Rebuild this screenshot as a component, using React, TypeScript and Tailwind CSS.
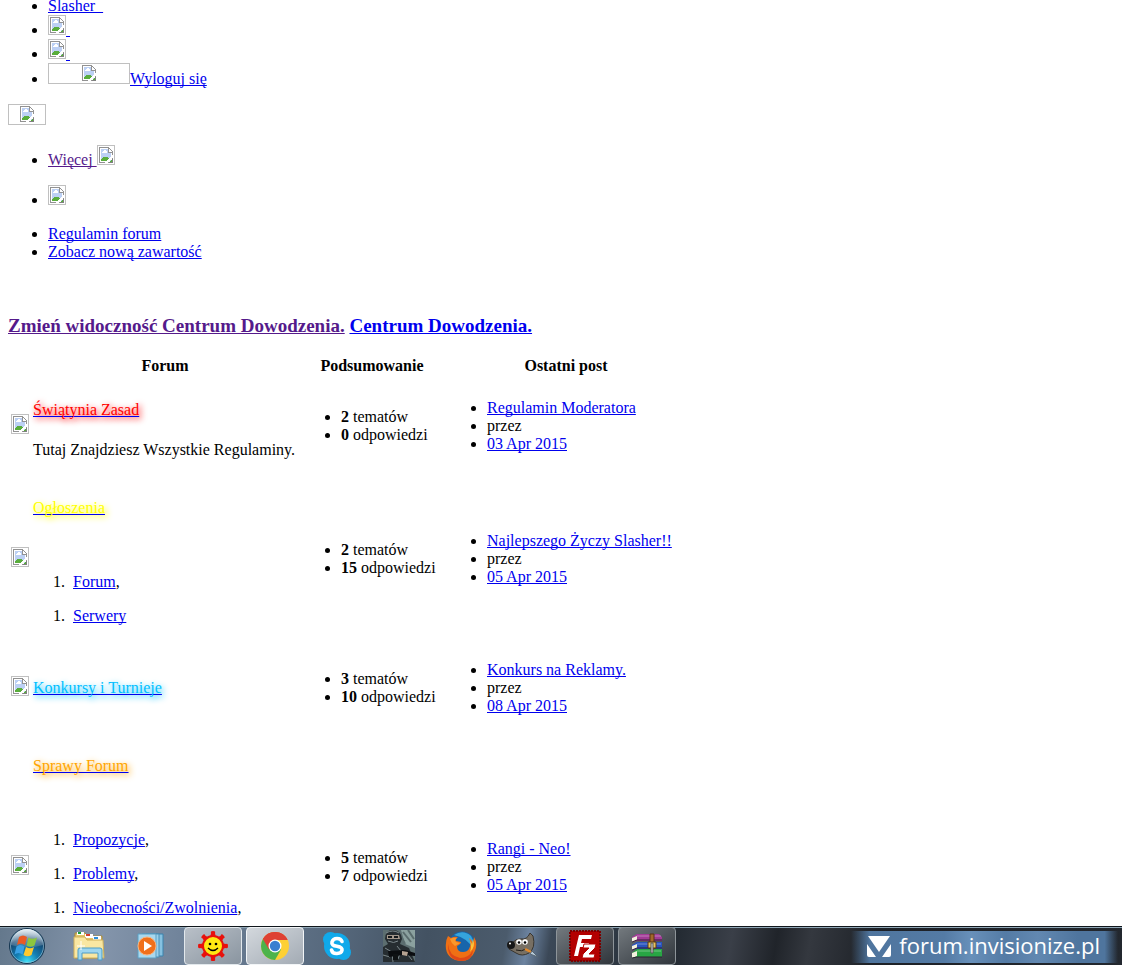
import type { ReactNode } from 'react';

const link = 'text-[#0000ee] underline decoration-[#0000ee]';
const visited = 'text-[#551a8b] underline decoration-[#551a8b]';

function BrokenImage({ size = 'w-[18px] h-5', label }: { size?: string; label: string }) {
  return (
    <span
      role="img"
      aria-label={label}
      className={`${size} inline-block overflow-hidden border border-[#c0c0c0] pt-px align-baseline`}
    >
      <svg className="mx-auto block" width="14" height="16" viewBox="0 0 14 16" shapeRendering="crispEdges">
        <path d="M0 0h10v1h1v1h1v1h1v1h1v12H0z" fill="#929292" />
        <path d="M1 1h8v5h4v9H1z" fill="#fff" />
        <path d="M2 2h7v4h3v8H2z" fill="#bcd0f4" />
        <path d="M3 5h1V4h1V3h2v1h1v2H3z" fill="#fff" />
        <path d="M10 2h1v1h1v1h1v1h-3z" fill="#fff" />
        <path d="M2 14v-2h1v-1h1v-1h5v1h1v3z" fill="#59ad3c" />
        <path d="M14 8v3h-1v1h-1v1h-1v1h-1v1H9v1H6v-1h1v-1h1v-1h1v-1h1v-1h1v-1h1V9h1V8z" fill="#fff" />
        <path d="M13 12h1v4h-4v-1h3z" fill="#808080" />
        <path d="M11 14h1v-1h1v2h-2z" fill="#59ad3c" />
      </svg>
    </span>
  );
}

type Forum = {
  name: string;
  color: string;
  description?: string;
  children?: string[];
  tail?: string;
  topics: number;
  replies: number;
  last: string;
  date: string;
};

const forums: Forum[] = [
  {
    name: 'Świątynia Zasad',
    color: 'text-[#ff0000] [text-shadow:2px_2px_6px_#ff0000]',
    description: 'Tutaj Znajdziesz Wszystkie Regulaminy.',
    topics: 2,
    replies: 0,
    last: 'Regulamin Moderatora',
    date: '03 Apr 2015',
  },
  {
    name: 'Ogłoszenia',
    color: 'text-[#ffff00] [text-shadow:2px_2px_6px_#ffff00]',
    children: ['Forum', 'Serwery'],
    topics: 2,
    replies: 15,
    last: 'Najlepszego Życzy Slasher!!',
    date: '05 Apr 2015',
  },
  {
    name: 'Konkursy i Turnieje',
    color: 'text-[#00bfff] [text-shadow:2px_2px_6px_#00bfff]',
    topics: 3,
    replies: 10,
    last: 'Konkurs na Reklamy.',
    date: '08 Apr 2015',
  },
  {
    name: 'Sprawy Forum',
    color: 'text-[#ffa500] [text-shadow:2px_2px_6px_#ffa500]',
    children: ['Propozycje', 'Problemy', 'Nieobecności/Zwolnienia'],
    tail: 'pb-[66px]',
    topics: 5,
    replies: 7,
    last: 'Rangi - Neo!',
    date: '05 Apr 2015',
  },
];

function ForumRow({ forum }: { forum: Forum }) {
  const items = forum.children ?? [];
  return (
    <tr>
      <td className="p-px">
        <BrokenImage label="Status" />
      </td>
      <td className={`p-px ${forum.tail ?? ''}`}>
        <h4 className="my-[22px]">
          <a href="#forum" className={link}>
            <span className={forum.color}>{forum.name}</span>
          </a>
        </h4>
        {forum.description && <p className="pb-3.5 whitespace-nowrap">{forum.description}</p>}
        {items.length > 0 && (
          <div className="pt-[18px]">
            {items.map((item, i) => (
              <ol key={item} className="my-4 list-['1.__'] pl-10">
                <li>
                  <a href="#subforum" className={link}>{item}</a>
                  {(forum.tail || i < items.length - 1) && ','}
                </li>
              </ol>
            ))}
          </div>
        )}
      </td>
      <td className="p-px">
        <ul className="my-4 list-disc pl-10">
          <li><b>{forum.topics}</b> tematów</li>
          <li><b>{forum.replies}</b> odpowiedzi</li>
        </ul>
      </td>
      <td className="p-px">
        <ul className="my-4 list-disc pl-10">
          <li><a href="#topic" className={link}>{forum.last}</a></li>
          <li>przez</li>
          <li><a href="#post" className={link}>{forum.date}</a></li>
        </ul>
      </td>
    </tr>
  );
}

function StartOrb() {
  return (
    <svg width="38" height="38" viewBox="0 0 38 38">
      <defs>
        <radialGradient id="orb" cx="50%" cy="95%" r="90%">
          <stop offset="0" stopColor="#3fe0f8" />
          <stop offset=".35" stopColor="#1480b4" />
          <stop offset=".75" stopColor="#14456f" />
          <stop offset="1" stopColor="#7fa3bd" />
        </radialGradient>
        <linearGradient id="orbShine" x1="0" y1="0" x2="0" y2="1">
          <stop offset="0" stopColor="#fff" stopOpacity=".8" />
          <stop offset="1" stopColor="#fff" stopOpacity=".1" />
        </linearGradient>
      </defs>
      <circle cx="19" cy="19" r="17.5" fill="url(#orb)" stroke="#163650" />
      <circle cx="19" cy="19" r="16.5" fill="none" stroke="#a3cbdc" strokeOpacity=".6" />
      <path d="M3 18a16 16 0 0 1 32 0q-16 5-32 0z" fill="url(#orbShine)" />
      <path d="M11 10q4-3 8 0l-2 8q-4-3-8 0z" fill="#ea5a24" />
      <path d="M20.500 10.500q4 2.500 8.500 0l-2.500 8q-4 2.500-8 0z" fill="#8cc63e" />
      <path d="M8.500 19.500q4-3 8 0l-2 8q-4-3-8 0z" fill="#38a0e4" />
      <path d="M18 20q4 2.500 8 0l-2.500 8q-4 2.500-8 0z" fill="#fdc92e" />
    </svg>
  );
}

function ExplorerIcon() {
  return (
    <svg width="34" height="32" viewBox="0 0 34 32">
      <path d="M3 3h10l2 3h15v22H3z" fill="#e4c469" stroke="#a98b3d" />
      <path d="M5 2h7v3H5z" fill="#fff" /><path d="M6 2h3v2H6z" fill="#1ba13b" />
      <path d="M13 4h8v4h-8z" fill="#fff" /><path d="M14 4h4v2h-4z" fill="#d5402b" />
      <path d="M21 6h8v4h-8z" fill="#fff" /><path d="M22 7h4v2h-4z" fill="#2c8fdb" />
      <path d="M2 7h11l2 3h16l1 18H2z" fill="#f9e7a2" stroke="#cfb05a" />
      <path d="M6 30V20q0-2 2-2h20q2 0 2 2v10h-4v-7H10v7z" fill="#9dd6ef" stroke="#4c9cc6" />
      <path d="M9 11v9M5 16h8" stroke="#fff" />
    </svg>
  );
}

function MediaIcon() {
  return (
    <svg width="30" height="28" viewBox="0 0 30 28">
      <path d="M10 2h17v22H10z" fill="#86c1e0" stroke="#3b83ad" />
      <path d="M6 2h17v23H6z" fill="#9cd0ea" stroke="#4890b8" />
      <path d="M2 2h18v24H2z" fill="#a9d8ee" stroke="#5a9fc3" />
      <circle cx="11" cy="14" r="9" fill="#f0701c" stroke="#fbb27a" />
      <path d="M8 9l8 5-8 5z" fill="#fff" />
    </svg>
  );
}

function SunIcon() {
  return (
    <svg width="32" height="32" viewBox="0 0 32 32">
      {[0, 45, 90, 135, 180, 225, 270, 315].map((a) => (
        <path key={a} d="M13 8l1-5q-1-2 2-2t2 2l1 5z" fill="#e8110c" transform={`rotate(${a} 16 16)`} />
      ))}
      <circle cx="16" cy="16" r="10" fill="#ffe812" stroke="#e8110c" strokeWidth="2" />
      <circle cx="13" cy="14" r="1.300" />
      <circle cx="19" cy="14" r="1.300" />
      <path d="M11 18q5 5 10 0" fill="none" stroke="#000" strokeWidth="1.300" />
    </svg>
  );
}

function ChromeIcon() {
  return (
    <svg width="30" height="30" viewBox="0 0 30 30">
      <circle cx="15" cy="15" r="14" fill="#fdd035" />
      <path d="M15 15L2.900 8A14 14 0 0 0 15 29l6-10.500z" fill="#4db34b" />
      <path d="M15 15L2.900 8A14 14 0 0 1 27.500 8.500H15z" fill="#de4134" />
      <path d="M2.900 8L9 18.500 15 9h12.700A14 14 0 0 0 2.900 8z" fill="#de4134" />
      <circle cx="15" cy="15" r="6.500" fill="#fff" />
      <circle cx="15" cy="15" r="5.200" fill="#3b7fd0" />
    </svg>
  );
}

function SkypeIcon() {
  return (
    <svg width="30" height="30" viewBox="0 0 30 30">
      <circle cx="15" cy="15" r="13" fill="#10a9ea" />
      <circle cx="8.500" cy="8.500" r="7.500" fill="#10a9ea" />
      <circle cx="21.500" cy="21.500" r="7.500" fill="#10a9ea" />
      <path
        d="M20 10.500q-1-3-5-3t-5 3.500 5 4.200q5.500 1 5 4t-5 3.300-5.500-3.500"
        fill="none"
        stroke="#fff"
        strokeWidth="3.600"
        strokeLinecap="round"
      />
    </svg>
  );
}

function SoldierIcon() {
  return (
    <svg width="32" height="32" viewBox="0 0 32 32">
      <path d="M0 0h32v32H0z" fill="#5c6e70" />
      <path d="M18 0h14v18l-10-4z" fill="#8ba19f" />
      <path d="M20 2l8 10M25 0l6 9M18 6l4 8" stroke="#5a6c6d" strokeWidth="2" />
      <path d="M2 9q0-9 8-9t9 9l-2 5 9 4 6 14H0V17l5-3z" fill="#262d31" />
      <path d="M4 5h12l1 4H4z" fill="#a3978a" />
      <path d="M5 6h4v2H5zM11 6h4v2h-4z" fill="#15191c" />
      <path d="M3 3q7-4 13 0M5 11q6 3 10 0M2 18l7 4 1 10M14 16l4 5-3 8M21 20l8 10M0 25l7 2" fill="none" stroke="#7b878b" />
      <path d="M5 21l17-1 10 3v3l-12-1-14 2z" fill="#0b0d10" />
      <path d="M10 24h5v6h-5z" fill="#0f1214" />
      <path d="M19 21l6 1-1 4-5-1z" fill="#b5a291" />
    </svg>
  );
}

function FirefoxIcon() {
  return (
    <svg width="32" height="32" viewBox="0 0 32 32">
      <circle cx="17" cy="15" r="13.500" fill="#1765ab" />
      <path d="M9 5q9-6 17 1 4 6 2 13-5-11-19-14z" fill="#35a4dc" />
      <path d="M3 6l3 2q3-2 7-1-3 2-2 4l5 1q0 2-4 4 0 6 6 6 4 0 6-3 3-5 0-11 4 3 4 7l1-8q4 6 1 14-4 10-14 10Q3 30 1 19 0 11 3 6z" fill="#ef7014" />
      <path d="M3 14q1 12 12 14 9 0 13-8-1 11-12 11Q2 30 3 14z" fill="#df4818" />
      <path d="M28 9q3 8-3 13 2-5 0-11 2 2 2 4z" fill="#fdc43a" />
      <path d="M5 9q4-2 7-1-3 2-1 4l4 1-5 3q-4-3-5-7z" fill="#f9982c" />
    </svg>
  );
}

function GimpIcon() {
  return (
    <svg width="34" height="28" viewBox="0 0 34 28">
      <path d="M6 11q5-5 9-4 6 1 9-6l3 3q3 12-4 17-7 4-13 0L3 17z" fill="#776f63" stroke="#39352f" />
      <circle cx="5" cy="13" r="4" fill="#171717" />
      <circle cx="4" cy="11.500" r="1" fill="#fff" />
      <circle cx="13" cy="10" r="2.800" fill="#fff" />
      <circle cx="19" cy="10" r="2.800" fill="#fff" />
      <circle cx="13" cy="10.500" r="1.300" />
      <circle cx="19" cy="10.500" r="1.300" />
      <path d="M10 18q6 2 10-1" stroke="#201d19" fill="none" />
      <path d="M19 17l8 4" stroke="#e18a2e" strokeWidth="2.500" />
      <path d="M26 19l6 6-8-3z" fill="#b9ccd9" stroke="#586775" />
    </svg>
  );
}

function FileZillaIcon() {
  return (
    <svg width="32" height="32" viewBox="0 0 32 32">
      <path d="M1 1h30v30H1z" fill="#b30000" stroke="#7b0000" strokeWidth="2" strokeDasharray="2 1" />
      <path d="M10 5h13l-1 4H13l-1 4h8l-1 4h-8l-2 9H5z" fill="#fff" />
      <path d="M15 14h12l-1 4-6 6h6l-1 4H13l1-4 6-6h-6z" fill="#fff" stroke="#b30000" />
    </svg>
  );
}

function WinRarIcon() {
  return (
    <svg width="32" height="26" viewBox="0 0 32 26">
      <path d="M1 4l5-3h22l3 3v4H6L1 9z" fill="#a13b96" />
      <path d="M1 12l5-3h25v7H6l-5 1z" fill="#2853be" />
      <path d="M1 20l5-4h25v8H6l-5 1z" fill="#28a644" />
      <path d="M6 3h24M6 11h24M6 18h24" stroke="#fff" strokeOpacity=".35" />
      <path d="M1 5l5-2v4L1 9zM1 13l5-2v4l-5 2zM1 20l5-2v5l-5 2z" fill="#f4f0df" />
      <path d="M1 9l5-2h25M1 17l5-2h25M1 25l5-1h25" fill="none" stroke="#2c2032" />
      <path d="M19 1h4v15h-4z" fill="#a4682a" stroke="#583312" />
      <path d="M17 9h8v6h-8z" fill="#e5c35c" stroke="#583312" />
      <path d="M20 10h2v10h-2z" fill="#dadada" stroke="#555" />
    </svg>
  );
}

type Task = { title: string; icon: ReactNode; frame?: string };

const active = 'rounded-sm border border-[#e2e8ec] bg-linear-to-br from-[#b9c0c8] to-[#8a95a0]';
const focused = 'rounded-sm border border-[#f2f5f7] bg-linear-to-br from-[#d3d8dd] to-[#a3abb4]';
const running = 'rounded-sm border border-[#8d9499] bg-linear-to-br from-[#73797e] to-[#30363c]';

const tasks: Task[] = [
  { title: 'Eksplorator', icon: <ExplorerIcon /> },
  { title: 'Media Player', icon: <MediaIcon /> },
  { title: 'Gadu-Gadu', icon: <SunIcon />, frame: active },
  { title: 'Chrome', icon: <ChromeIcon />, frame: focused },
  { title: 'Skype', icon: <SkypeIcon /> },
  { title: 'Counter-Strike', icon: <SoldierIcon /> },
  { title: 'Firefox', icon: <FirefoxIcon /> },
  { title: 'GIMP', icon: <GimpIcon /> },
  { title: 'FileZilla', icon: <FileZillaIcon />, frame: running },
  { title: 'WinRAR', icon: <WinRarIcon />, frame: running },
];

function Taskbar() {
  return (
    <footer className="flex h-[39px] shrink-0 items-stretch border-t border-[#10161c] bg-[linear-gradient(100deg,#64788c_0%,#8495ab_9%,#71849b_16%,#56687c_30%,#435262_38%,#4b5b6c_45%,#6c83a0_47%,#3b4857_49%,#232a32_60%,#3a3f48_65%,#20242a_69%,#34383f_72%,#1d2127_78%,#23282f_100%)] shadow-[inset_0_1px_0_#8fa6b5]">
      <button type="button" aria-label="Start" className="mr-3.5 ml-2 flex items-center">
        <StartOrb />
      </button>
      <nav className="flex gap-1">
        {tasks.map((task) => (
          <button
            key={task.title}
            type="button"
            aria-label={task.title}
            className={`flex w-[58px] items-center justify-center ${task.frame ?? ''}`}
          >
            {task.icon}
          </button>
        ))}
      </nav>
      <div className="mt-1 mr-1 mb-0.5 ml-auto flex items-center gap-2 bg-[linear-gradient(90deg,transparent_0%,#4f759e_7%,#547ba5_35%,#6890ba_45%,#547ba5_58%,#6288b1_70%,#4f759e_85%,#4f759e_95%,transparent_100%)] pr-[18px] pb-1 pl-4 font-['Open_Sans',sans-serif] text-[22px] leading-7 text-white">
        <svg className="mt-1" width="24" height="22" viewBox="0 0 24 22" fill="#fff">
          <path d="M1 0h22L12 16z" />
          <path d="M0 8l9 13H2q-2 0-2-2zM24 8l-9 13h7q2 0 2-2z" />
        </svg>
        <span>forum.invisionize.pl</span>
      </div>
    </footer>
  );
}

export default function App() {
  return (
    <div className="flex h-screen flex-col overflow-hidden bg-white font-['Liberation_Serif','Times_New_Roman',serif] text-base leading-[18px] text-black [text-decoration-skip-ink:none]">
      <main className="-mt-[3px] min-h-0 flex-1 overflow-hidden px-2">
        <ul className="list-disc pl-10">
          <li><a href="#profile" className={link}>Slasher &nbsp;</a></li>
          <li><a href="#notifications" className={link}><BrokenImage label="Powiadomienia" />&nbsp;</a></li>
          <li><a href="#inbox" className={link}><BrokenImage label="Wiadomości" />&nbsp;</a></li>
          <li>
            <a href="#logout" className={link}><BrokenImage size="w-[82px] h-[21px]" label="Wyloguj" />Wyloguj się</a>
          </li>
        </ul>
        <div className="my-4">
          <a href="#home"><BrokenImage size="w-[38px] h-[21px]" label="Logo" /></a>
        </div>
        <ul className="my-4 list-disc pl-10">
          <li><a href="#more" className={visited}>Więcej <BrokenImage label="Menu" /></a></li>
        </ul>
        <ul className="my-4 list-disc pl-10">
          <li><a href="#start"><BrokenImage label="Start" /></a></li>
        </ul>
        <ul className="my-4 list-disc pl-10">
          <li><a href="#rules" className={link}>Regulamin forum</a></li>
          <li><a href="#new" className={link}>Zobacz nową zawartość</a></li>
        </ul>

        <h3 className="mt-[54px] mb-[18px] text-[19px] leading-[21px] font-bold">
          <a href="#toggle" className={visited}>Zmień widoczność Centrum Dowodzenia.</a>{' '}
          <a href="#category" className={link}>Centrum Dowodzenia.</a>
        </h3>
        <table className="border-separate border-spacing-0.5">
          <thead>
            <tr>
              <th className="w-5 p-px" />
              <th className="w-[266px] min-w-[266px] p-px">Forum</th>
              <th className="w-36 min-w-36 p-px">Podsumowanie</th>
              <th className="w-60 min-w-60 p-px">Ostatni post</th>
            </tr>
          </thead>
          <tbody>
            {forums.map((forum) => (
              <ForumRow key={forum.name} forum={forum} />
            ))}
          </tbody>
        </table>
      </main>
      <Taskbar />
    </div>
  );
}
